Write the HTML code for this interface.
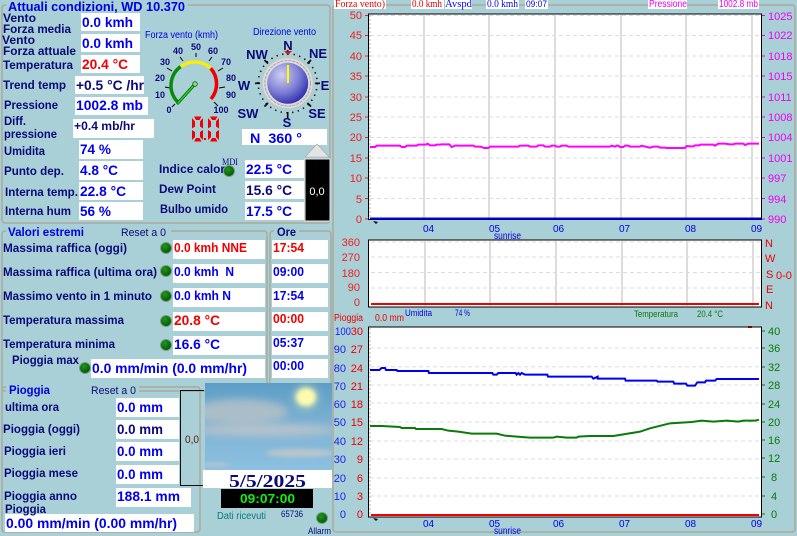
<!DOCTYPE html>
<html><head><meta charset="utf-8"><style>
html,body{margin:0;padding:0;background:#a9cfd7;width:797px;height:536px;overflow:hidden}
svg{display:block;font-family:"Liberation Sans",sans-serif}
.l{font:bold 12px "Liberation Sans",sans-serif;fill:#0a0a78}
.v{font:bold 14px "Liberation Sans",sans-serif;fill:#0000f0}
.r{fill:#f00000}.n{fill:#0a0a78}
.t{font:11px "Liberation Sans",sans-serif}
.a{font:11px "Liberation Sans",sans-serif}
.g{font:bold 9px "Liberation Sans",sans-serif;fill:#0a0a78;text-anchor:middle}
.c{font:bold 13px "Liberation Sans",sans-serif;fill:#0a0a78;text-anchor:middle}
.s{font:9px "Liberation Sans",sans-serif}
.w{fill:#fff}
.b{fill:none;stroke:#aaa99c;stroke-width:1.5}
.d{stroke:#dcdcdc;stroke-width:1;stroke-dasharray:4 3;fill:none}
.vl{stroke:#dcdcdc;stroke-width:2;fill:none}
</style></head><body>
<svg width="797" height="536" viewBox="0 0 797 536" xmlns="http://www.w3.org/2000/svg">
<defs>
<radialGradient id="ball" cx="35%" cy="30%" r="80%"><stop offset="0" stop-color="#cfcff2"/><stop offset=".55" stop-color="#7b7bd2"/><stop offset="1" stop-color="#2020a8"/></radialGradient>
<linearGradient id="sky" x1="0" y1="0" x2="0" y2="1"><stop offset="0" stop-color="#5c9dc6"/><stop offset=".5" stop-color="#7fb3d3"/><stop offset="1" stop-color="#8cc0e0"/></linearGradient>
<filter id="bl" x="-30%" y="-60%" width="160%" height="220%"><feGaussianBlur stdDeviation="4"/></filter>
<filter id="bl2" x="-50%" y="-50%" width="200%" height="200%"><feGaussianBlur stdDeviation="2"/></filter>
<clipPath id="skyc"><rect x="205" y="383" width="127" height="87"/></clipPath>
<radialGradient id="led" cx="40%" cy="35%" r="70%"><stop offset="0" stop-color="#1c9a1c"/><stop offset="1" stop-color="#005000"/></radialGradient>
</defs>

<!-- group boxes -->
<rect class="b" x="2" y="5" width="328" height="218" rx="3"/>
<rect class="b" x="2" y="231" width="265" height="160" rx="3"/>
<rect class="b" x="270" y="231" width="61" height="160" rx="3"/>
<rect class="b" x="2" y="387" width="198" height="145" rx="3"/>
<rect class="b" x="333" y="5" width="462" height="527" rx="3"/>

<!-- title masks -->
<rect x="6" y="0" width="182" height="10" fill="#a9cfd7"/>
<rect x="6" y="226" width="165" height="11" fill="#a9cfd7"/>
<rect x="274" y="226" width="25" height="11" fill="#a9cfd7"/>
<rect x="6" y="383" width="133" height="11" fill="#a9cfd7"/>

<text x="8" y="11" fill="#0000e0" textLength="177" lengthAdjust="spacingAndGlyphs" style="font:bold 13px 'Liberation Sans',sans-serif">Attuali condizioni, WD 10.370</text>

<!-- white boxes top -->
<rect class="w" x="81" y="13" width="59" height="18"/>
<rect class="w" x="81" y="34" width="59" height="18"/>
<rect class="w" x="81" y="55" width="59" height="18"/>
<rect class="w" x="75" y="76" width="69" height="18"/>
<rect class="w" x="75" y="97" width="73" height="18"/>
<rect class="w" x="73" y="119" width="81" height="19"/>
<rect class="w" x="79" y="140" width="64" height="19"/>
<rect class="w" x="79" y="161" width="64" height="19"/>
<rect class="w" x="79" y="182" width="64" height="18"/>
<rect class="w" x="79" y="202" width="64" height="18"/>
<rect class="w" x="245" y="160" width="59" height="18"/>
<rect class="w" x="245" y="181" width="59" height="18"/>
<rect class="w" x="245" y="202" width="59" height="18"/>
<rect class="w" x="242" y="129" width="85" height="16"/>

<!-- labels top -->
<text class="l" x="3" y="22" textLength="33" lengthAdjust="spacingAndGlyphs">Vento</text>
<text class="l" x="3" y="33" textLength="68" lengthAdjust="spacingAndGlyphs">Forza media</text>
<text class="l" x="2" y="44" textLength="33" lengthAdjust="spacingAndGlyphs">Vento</text>
<text class="l" x="3" y="55" textLength="73" lengthAdjust="spacingAndGlyphs">Forza attuale</text>
<text class="l" x="3" y="69" textLength="70" lengthAdjust="spacingAndGlyphs">Temperatura</text>
<text class="l" x="3" y="89" textLength="63" lengthAdjust="spacingAndGlyphs">Trend temp</text>
<text class="l" x="4" y="109" textLength="54" lengthAdjust="spacingAndGlyphs">Pressione</text>
<text class="l" x="4" y="125" textLength="22" lengthAdjust="spacingAndGlyphs">Diff.</text>
<text class="l" x="4" y="138" textLength="53" lengthAdjust="spacingAndGlyphs">pressione</text>
<text class="l" x="4" y="155" textLength="41" lengthAdjust="spacingAndGlyphs">Umidita</text>
<text class="l" x="4" y="175" textLength="60" lengthAdjust="spacingAndGlyphs">Punto dep.</text>
<text class="l" x="5" y="196" textLength="73" lengthAdjust="spacingAndGlyphs">Interna temp.</text>
<text class="l" x="5" y="215" textLength="66" lengthAdjust="spacingAndGlyphs">Interna hum</text>
<text class="l" x="159" y="173" textLength="66" lengthAdjust="spacingAndGlyphs">Indice calor</text>
<text class="l" x="159" y="193" textLength="57" lengthAdjust="spacingAndGlyphs">Dew Point</text>
<text class="l" x="160" y="213" textLength="68" lengthAdjust="spacingAndGlyphs">Bulbo umido</text>
<text class="s" x="222" y="165" fill="#0a0a78" textLength="16" lengthAdjust="spacingAndGlyphs" style="font-family:'Liberation Serif',serif">MDI</text>
<circle cx="229" cy="171" r="5.5" fill="url(#led)" stroke="#7d9a80"/>

<!-- values top -->
<text class="v" x="82" y="27" textLength="51" lengthAdjust="spacingAndGlyphs">0.0 kmh</text>
<text class="v" x="82" y="48" textLength="51" lengthAdjust="spacingAndGlyphs">0.0 kmh</text>
<text class="v r" x="82" y="69" textLength="46" lengthAdjust="spacingAndGlyphs">20.4 °C</text>
<text class="v n" x="76" y="90" textLength="68" lengthAdjust="spacingAndGlyphs">+0.5 °C /hr</text>
<text class="v" x="76" y="110" textLength="67" lengthAdjust="spacingAndGlyphs">1002.8 mb</text>
<text class="l" x="74" y="130" textLength="61" lengthAdjust="spacingAndGlyphs">+0.4 mb/hr</text>
<text class="v" x="80" y="154" textLength="31" lengthAdjust="spacingAndGlyphs">74 %</text>
<text class="v" x="80" y="175" textLength="38" lengthAdjust="spacingAndGlyphs">4.8 °C</text>
<text class="v" x="80" y="196" textLength="46" lengthAdjust="spacingAndGlyphs">22.8 °C</text>
<text class="v" x="80" y="216" textLength="31" lengthAdjust="spacingAndGlyphs">56 %</text>
<text class="v" x="246" y="174" textLength="46" lengthAdjust="spacingAndGlyphs">22.5 °C</text>
<text class="v n" x="246" y="195" textLength="46" lengthAdjust="spacingAndGlyphs">15.6 °C</text>
<text class="v" x="246" y="216" textLength="46" lengthAdjust="spacingAndGlyphs">17.5 °C</text>
<text class="v" x="250" y="143" textLength="52" lengthAdjust="spacingAndGlyphs" xml:space="preserve">N  360 °</text>

<!-- wind gauge -->
<text x="145" y="38" fill="#0000e0" textLength="73" lengthAdjust="spacingAndGlyphs" style="font:10px 'Liberation Sans',sans-serif">Forza vento (kmh)</text>
<g stroke="#000" stroke-width="1" fill="none">
<path d="M175 104 L172 107M170 88 L165 87M172 71 L167 68M183 61 L180 57M196 57 V53M209 61 L212 57M218 71 L223 68M219 88 L225 87M214 102 L218 106"/>
</g>
<path d="M177.300 101.600 A23.500 23.500 0 0 1 180.700 66.600" fill="none" stroke="#0a8a0a" stroke-width="3.500"/>
<path d="M180.700 66.600 A23.500 23.500 0 0 1 210.700 68.300" fill="none" stroke="#f5ee10" stroke-width="3.500"/>
<path d="M210.700 68.300 A23.500 23.500 0 0 1 211 99" fill="none" stroke="#f00000" stroke-width="3.500"/>
<path d="M177 104 L195 84" stroke="#0a5a0a" stroke-width="3" fill="none"/>
<path d="M177.500 103.500 L195 84" stroke="#10e010" stroke-width="1.500" fill="none"/>
<circle cx="195" cy="84" r="2.300" fill="#8fdf8f" stroke="#0a5a0a" stroke-width=".8"/>
<text class="g" x="169" y="113">0</text><text class="g" x="160" y="98">10</text><text class="g" x="160" y="81">20</text>
<text class="g" x="165" y="65">30</text><text class="g" x="178" y="54">40</text><text class="g" x="196" y="50">50</text>
<text class="g" x="213" y="54">60</text><text class="g" x="226" y="65">70</text><text class="g" x="231" y="81">80</text>
<text class="g" x="231" y="98">90</text><text class="g" x="221" y="113">100</text>

<!-- 7 seg -->
<g fill="#f00000">
<path d="M194 116.500H201.500L199.500 120H196ZM192 118L195 121.500V126.500L192 128.500ZM203 118L200 121.500V126.500L203 128.500ZM192 130L195 132V137L192 140ZM203 130L200 132V137L203 140ZM196 138H199.500L201.500 141.500H194Z"/>
<g transform="translate(16,0)"><path d="M194 116.500H201.500L199.500 120H196ZM192 118L195 121.500V126.500L192 128.500ZM203 118L200 121.500V126.500L203 128.500ZM192 130L195 132V137L192 140ZM203 130L200 132V137L203 140ZM196 138H199.500L201.500 141.500H194Z"/></g>
<rect x="204" y="138" width="2" height="2"/>
</g>

<!-- compass -->
<text x="253" y="35" fill="#0000e0" textLength="63" lengthAdjust="spacingAndGlyphs" style="font:10px 'Liberation Sans',sans-serif">Direzione vento</text>
<circle cx="287.700" cy="83.300" r="29.500" fill="none" stroke="#000" stroke-width="1.500" stroke-dasharray="1.300 4.490"/>
<g stroke="#000" stroke-width="1.600"><path d="M287.700 50V55M287.700 112V118M255 83.300H260M315 83.300H320M264.500 60L268 63.500M311 60L307.500 63.500M264.500 106.500L268 103M311 106.500L307.500 103"/></g>
<circle cx="287.700" cy="83.300" r="25.500" fill="#dcdcdc"/>
<circle cx="287.700" cy="83.300" r="25.500" fill="none" stroke="#c4c4c4" stroke-width="1"/>
<circle cx="287.700" cy="83.300" r="22.800" fill="none" stroke="#a8a8a8" stroke-width="1" stroke-dasharray="3 1"/>
<circle cx="287.700" cy="83.300" r="20.500" fill="url(#ball)"/>
<rect x="287" y="65" width="2" height="18" fill="#ffff00"/>
<path d="M284 51H292L288 55Z" fill="#e01010"/>
<text class="c" x="288" y="50">N</text><text class="c" x="318" y="58">NE</text><text class="c" x="325" y="90">E</text>
<text class="c" x="317" y="118">SE</text><text class="c" x="287" y="127">S</text><text class="c" x="248" y="118">SW</text>
<text class="c" x="244" y="90">W</text><text class="c" x="257" y="59">NW</text>

<!-- tube -->
<path d="M317 144L329 157H305Z" fill="#e4e4e4" stroke="#a8a8a0" stroke-width=".6"/>
<rect x="305" y="159" width="25" height="62" fill="#000" stroke="#e6e6e6" stroke-width="1"/>
<text x="317" y="195" class="a" fill="#fff" text-anchor="middle">0,0</text>

<!-- valori estremi -->
<text class="l" x="8" y="236" style="fill:#0000e0" textLength="76" lengthAdjust="spacingAndGlyphs">Valori estremi</text>
<text class="a" x="121" y="236" fill="#0a0a78" textLength="45" lengthAdjust="spacingAndGlyphs">Reset a 0</text>
<text class="l" x="277" y="236" textLength="19" lengthAdjust="spacingAndGlyphs">Ore</text>
<g class="w">
<rect x="173" y="240" width="92" height="19"/><rect x="173" y="264" width="92" height="19"/><rect x="173" y="288" width="92" height="19"/>
<rect x="173" y="312" width="92" height="19"/><rect x="173" y="336" width="92" height="19"/><rect x="91" y="359" width="174" height="19"/>
<rect x="272" y="240" width="56" height="19"/><rect x="272" y="264" width="56" height="19"/><rect x="272" y="288" width="56" height="19"/>
<rect x="272" y="312" width="56" height="19"/><rect x="272" y="336" width="56" height="19"/><rect x="272" y="359" width="56" height="19"/>
</g>
<text class="l" x="3" y="252" textLength="124" lengthAdjust="spacingAndGlyphs">Massima raffica (oggi)</text>
<text class="l" x="3" y="276" textLength="154" lengthAdjust="spacingAndGlyphs">Massima raffica (ultima ora)</text>
<text class="l" x="3" y="300" textLength="149" lengthAdjust="spacingAndGlyphs">Massimo vento in 1 minuto</text>
<text class="l" x="3" y="324" textLength="121" lengthAdjust="spacingAndGlyphs">Temperatura massima</text>
<text class="l" x="3" y="348" textLength="112" lengthAdjust="spacingAndGlyphs">Temperatura minima</text>
<text class="l" x="12" y="364" textLength="67" lengthAdjust="spacingAndGlyphs">Pioggia max</text>
<g fill="url(#led)" stroke="#7d9a80"><circle cx="166" cy="248" r="5.500"/><circle cx="166" cy="271" r="5.500"/><circle cx="166" cy="296" r="5.500"/><circle cx="166" cy="321" r="5.500"/><circle cx="166" cy="345" r="5.500"/><circle cx="85" cy="368" r="5.500"/></g>
<text class="v r" x="174" y="252" textLength="73" lengthAdjust="spacingAndGlyphs" style="font-size:13px">0.0 kmh NNE</text>
<text class="v" x="174" y="276" textLength="60" lengthAdjust="spacingAndGlyphs" style="font-size:13px" xml:space="preserve">0.0 kmh  N</text>
<text class="v" x="174" y="300" textLength="57" lengthAdjust="spacingAndGlyphs" style="font-size:13px">0.0 kmh N</text>
<text class="v r" x="174" y="325" textLength="46" lengthAdjust="spacingAndGlyphs">20.8 °C</text>
<text class="v" x="174" y="349" textLength="46" lengthAdjust="spacingAndGlyphs">16.6 °C</text>
<text class="v" x="92" y="373" textLength="155" lengthAdjust="spacingAndGlyphs">0.0 mm/min (0.0 mm/hr)</text>
<text class="v r" x="273" y="252" textLength="31" lengthAdjust="spacingAndGlyphs" style="font-size:13px">17:54</text>
<text class="v" x="273" y="276" textLength="31" lengthAdjust="spacingAndGlyphs" style="font-size:13px">09:00</text>
<text class="v" x="273" y="300" textLength="31" lengthAdjust="spacingAndGlyphs" style="font-size:13px">17:54</text>
<text class="v r" x="273" y="323" textLength="31" lengthAdjust="spacingAndGlyphs" style="font-size:13px">00:00</text>
<text class="v" x="273" y="347" textLength="31" lengthAdjust="spacingAndGlyphs" style="font-size:13px">05:37</text>
<text class="v" x="273" y="370" textLength="31" lengthAdjust="spacingAndGlyphs" style="font-size:13px">00:00</text>

<!-- pioggia -->
<text class="l" x="9" y="394" style="fill:#0000e0" textLength="41" lengthAdjust="spacingAndGlyphs">Pioggia</text>
<text class="a" x="91" y="394" fill="#0a0a78" textLength="45" lengthAdjust="spacingAndGlyphs">Reset a 0</text>
<g class="w">
<rect x="116" y="398" width="63" height="19"/><rect x="116" y="420" width="63" height="19"/><rect x="116" y="442" width="63" height="19"/>
<rect x="116" y="465" width="63" height="19"/><rect x="116" y="488" width="75" height="19"/><rect x="5" y="514" width="189" height="18"/>
</g>
<text class="l" x="5" y="411" textLength="54" lengthAdjust="spacingAndGlyphs">ultima ora</text>
<text class="l" x="3" y="433" textLength="77" lengthAdjust="spacingAndGlyphs">Pioggia (oggi)</text>
<text class="l" x="4" y="455" textLength="62" lengthAdjust="spacingAndGlyphs">Pioggia ieri</text>
<text class="l" x="4" y="477" textLength="74" lengthAdjust="spacingAndGlyphs">Pioggia mese</text>
<text class="l" x="4" y="500" textLength="73" lengthAdjust="spacingAndGlyphs">Pioggia anno</text>
<text class="l" x="5" y="513" textLength="41" lengthAdjust="spacingAndGlyphs">Pioggia</text>
<text class="v" x="117" y="412" textLength="46" lengthAdjust="spacingAndGlyphs">0.0 mm</text>
<text class="v n" x="117" y="434" textLength="46" lengthAdjust="spacingAndGlyphs">0.0 mm</text>
<text class="v" x="117" y="456" textLength="46" lengthAdjust="spacingAndGlyphs">0.0 mm</text>
<text class="v" x="117" y="479" textLength="46" lengthAdjust="spacingAndGlyphs">0.0 mm</text>
<text class="v" x="117" y="501" textLength="63" lengthAdjust="spacingAndGlyphs">188.1 mm</text>
<text class="v" x="6" y="528" textLength="171" lengthAdjust="spacingAndGlyphs">0.00 mm/min (0.00 mm/hr)</text>
<path d="M204 390.500H180.500V485.500H204" fill="none" stroke="#101010" stroke-width="1"/>
<text class="a" x="185" y="443" fill="#5a1a1a" textLength="14" lengthAdjust="spacingAndGlyphs">0,0</text>

<!-- sky -->
<g clip-path="url(#skyc)">
<rect x="205" y="383" width="127" height="87" fill="url(#sky)"/>
<ellipse cx="240" cy="412" rx="48" ry="13" fill="#b4c1c8" opacity=".85" filter="url(#bl)"/>
<ellipse cx="265" cy="430" rx="72" ry="6" fill="#bcc4cc" opacity=".9" filter="url(#bl)"/>
<ellipse cx="300" cy="453" rx="34" ry="4" fill="#bbc6cc" filter="url(#bl2)"/>
<ellipse cx="216" cy="465" rx="14" ry="2" fill="#b5c6d0" filter="url(#bl2)"/>
<circle cx="306" cy="397" r="13" fill="#e8e8a8" opacity=".4" filter="url(#bl)"/>
<ellipse cx="306" cy="397" rx="10" ry="9" fill="#fdfbb0" filter="url(#bl2)"/>
</g>
<rect class="w" x="203" y="470" width="129" height="18"/>
<text x="229" y="487" fill="#0a0a78" textLength="77" lengthAdjust="spacingAndGlyphs" style="font:bold 18px 'Liberation Serif',serif">5/5/2025</text>
<rect x="221" y="489" width="92" height="19" fill="#000"/>
<text x="240" y="503" fill="#10f010" textLength="55" lengthAdjust="spacingAndGlyphs" style="font:bold 13px 'Liberation Sans',sans-serif">09:07:00</text>
<text x="217" y="519" fill="#0a7a7a" textLength="49" lengthAdjust="spacingAndGlyphs" style="font:10px 'Liberation Sans',sans-serif">Dati ricevuti</text>
<text class="s" x="281" y="517" fill="#0a0a78" textLength="22" lengthAdjust="spacingAndGlyphs">65736</text>
<circle cx="322" cy="518" r="5.500" fill="url(#led)" stroke="#7d9a80"/>
<text class="s" x="308" y="534" fill="#0a0a78" textLength="23" lengthAdjust="spacingAndGlyphs">Allarm</text>

<!-- chart top labels -->
<g class="w">
<rect x="334" y="0" width="52" height="9"/><rect x="411" y="0" width="33" height="9"/><rect x="445" y="0" width="27" height="9"/>
<rect x="486" y="0" width="33" height="9"/><rect x="525" y="0" width="23" height="9"/><rect x="648" y="0" width="39" height="9"/><rect x="718" y="0" width="41" height="9"/>
</g>
<text x="335" y="7" fill="#f00000" textLength="50" lengthAdjust="spacingAndGlyphs" style="font:10px 'Liberation Serif',serif">Forza vento)</text>
<text x="412" y="7" fill="#e00000" textLength="30" lengthAdjust="spacingAndGlyphs" style="font:10px 'Liberation Serif',serif">0.0 kmh</text>
<text x="445" y="7" fill="#0000f0" textLength="27" lengthAdjust="spacingAndGlyphs" style="font:10px 'Liberation Serif',serif">Avspd</text>
<text x="487" y="7" fill="#0000e0" textLength="31" lengthAdjust="spacingAndGlyphs" style="font:10px 'Liberation Serif',serif">0.0 kmh</text>
<text class="s" x="526" y="7" fill="#0000e0" textLength="21" lengthAdjust="spacingAndGlyphs">09:07</text>
<text x="649" y="7" fill="#f000f0" textLength="38" lengthAdjust="spacingAndGlyphs" style="font:10px 'Liberation Sans',sans-serif">Pressione</text>
<text x="719" y="7" fill="#f000f0" textLength="39" lengthAdjust="spacingAndGlyphs" style="font:10px 'Liberation Sans',sans-serif">1002.8 mb</text>

<!-- chart 1 -->
<rect x="368.500" y="14" width="393" height="205.500" fill="#fff" stroke="#000" stroke-width="1"/>
<path class="d" d="M370 15.500H761M370 35.500H761M370 56H761M370 76H761M370 97H761M370 117H761M370 137.500H761M370 158H761M370 178H761M370 198.500H761"/>
<path class="vl" d="M424 15V218M489 15V218M555 15V218M621 15V218M686 15V218M752 15V218"/>
<path d="M370 15V218" stroke="#bbb" stroke-width="1" stroke-dasharray="2 2"/>
<g transform="translate(360,135) scale(.33333)" fill="none">
<path d="M30 36H45L50 32L55 32H120L125 36H135L140 32H170L175 29H197L203 26L210 31H225L230 29H240L245 28H268L275 36L285 32H340L345 35H360L365 36L372 39H385L390 35H475L480 32H505L510 35H530L535 31H550L555 35H570L575 32H585L590 35H600L605 32H620L625 35H750L755 32L765 35L770 32H775L780 36H790L795 32H805L810 35H840L845 32L870 38L880 35H895L900 38H915L920 39H975L980 33L990 34H1000L1005 31H1018L1020 29H1060L1065 32L1075 26H1095L1110 28H1120L1125 26H1150L1155 30L1165 26H1197" stroke="#ff00ff" stroke-width="6"/>
</g>
<path d="M370 218.500H761" stroke="#0000f0" stroke-width="2"/>
<g class="a" fill="#f02020" text-anchor="end">
<text x="362" y="19">50</text><text x="362" y="39">45</text><text x="362" y="60">40</text><text x="362" y="80">35</text><text x="362" y="101">30</text><text x="362" y="121">25</text><text x="362" y="141">20</text><text x="362" y="162">15</text><text x="362" y="182">10</text><text x="362" y="203">5</text><text x="362" y="223">0</text>
</g>
<path d="M365 15.500h3M365 35.500h3M365 56h3M365 76h3M365 97h3M365 117h3M365 137.500h3M365 158h3M365 178h3M365 198.500h3M365 219h3" stroke="#f02020"/>
<path d="M762 15.500h3M762 35.500h3M762 56h3M762 76h3M762 97h3M762 117h3M762 137.500h3M762 158h3M762 178h3M762 198.500h3M762 219h3" stroke="#f000f0"/>
<g class="a" fill="#f000f0">
<text x="768" y="20">1025</text><text x="768" y="39">1022</text><text x="768" y="60">1018</text><text x="768" y="80">1015</text><text x="768" y="101">1011</text><text x="768" y="121">1008</text><text x="768" y="141">1004</text><text x="768" y="162">1001</text><text x="768" y="182">997</text><text x="768" y="203">994</text><text x="768" y="223">990</text>
</g>
<path d="M373 221L378 222L376 224Z" fill="#000"/>
<g fill="#0000e0" style="font:10px 'Liberation Sans',sans-serif">
<text x="423" y="232">04</text><text x="489" y="232">05</text><text x="553" y="232">06</text><text x="619" y="232">07</text><text x="685" y="232">08</text><text x="751" y="232">09</text>
<text x="494" y="239" textLength="27" lengthAdjust="spacingAndGlyphs">sunrise</text>
</g>

<!-- chart 2 -->
<rect x="368.500" y="240" width="393" height="67" fill="#fff" stroke="#000" stroke-width="1"/>
<path class="d" d="M371 242H761M371 257H761M371 272.500H761M371 288H761"/>
<path class="vl" d="M425 241V306M490 241V306M556 241V306M622 241V306M687 241V306M753 241V306"/>
<path d="M371 304H759" stroke="#f00000" stroke-width="2"/>
<g class="a" fill="#f02020" text-anchor="end">
<text x="360" y="246">360</text><text x="360" y="261">270</text><text x="360" y="277">180</text><text x="360" y="291">90</text><text x="360" y="306">0</text>
</g>
<g class="a" fill="#f00000">
<text x="765" y="247">N</text><text x="765" y="262">W</text><text x="766" y="278">S</text><text x="766" y="293">E</text><text x="765" y="309">N</text><text x="776" y="279">0-0</text>
</g>
<text class="s" x="405" y="316" fill="#0000e0" textLength="27" lengthAdjust="spacingAndGlyphs">Umidita</text>
<text class="s" x="455" y="316" fill="#0000e0" textLength="15" lengthAdjust="spacingAndGlyphs">74 %</text>
<text class="s" x="634" y="317" fill="#0a7a0a" textLength="44" lengthAdjust="spacingAndGlyphs">Temperatura</text>
<text class="s" x="697" y="317" fill="#0a7a0a" textLength="26" lengthAdjust="spacingAndGlyphs">20.4 °C</text>
<text x="334" y="321" fill="#f00000" textLength="29" lengthAdjust="spacingAndGlyphs" style="font:10px 'Liberation Sans',sans-serif">Pioggia</text>
<text x="375" y="321" fill="#f00000" textLength="29" lengthAdjust="spacingAndGlyphs" style="font:10px 'Liberation Sans',sans-serif">0.0 mm</text>

<!-- chart 3 -->
<rect x="368.500" y="327" width="393" height="190" fill="#fff" stroke="#000" stroke-width="1"/>
<path class="d" d="M370 348H761M370 366.700H761M370 385H761M370 403H761M370 422H761M370 441H761M370 459H761M370 478H761M370 496H761"/>
<path d="M370 328V516" stroke="#bbb" stroke-width="1" stroke-dasharray="2 2"/>
<g transform="translate(330,350) scale(.33333)" fill="none" stroke-width="6">
<path stroke="#0000f0" d="M120 60H148L155 54H165L168 60H200L202 63H295L297 69H487L490 74H500L505 69H557L560 74L565 69L570 74L575 69L585 74H652L654 80H785L790 86L803 80V86H885L887 92H980L983 95H1030L1033 101H1068L1072 107H1095L1102 97H1125L1128 92H1155L1160 87H1287"/>
<path stroke="#0a7a0a" d="M120 228H155L210 231L215 234H255L258 237H335L355 242L385 245L425 251H500L525 257L560 260L600 263H670L680 260L710 263H740L745 260L780 258H850L880 253L930 245L960 235L1020 220L1085 216L1115 212L1150 215L1190 212L1225 215L1240 212H1275L1287 209"/>
</g>
<path d="M371 515H759" stroke="#f00000" stroke-width="2"/>
<path d="M748 326h4v2h-4z" fill="#800"/>
<g class="a" fill="#2020f0" text-anchor="end">
<text x="351" y="335" textLength="16" lengthAdjust="spacingAndGlyphs">100</text><text x="346" y="353">90</text><text x="346" y="372">80</text><text x="346" y="390">70</text><text x="346" y="408">60</text><text x="346" y="426">50</text><text x="346" y="445">40</text><text x="346" y="463">30</text><text x="346" y="482">20</text><text x="346" y="500">10</text><text x="346" y="518">0</text>
</g>
<g class="a" fill="#f00000" text-anchor="end">
<text x="363" y="335">30</text><text x="363" y="353">27</text><text x="363" y="372">24</text><text x="363" y="390">21</text><text x="363" y="408">18</text><text x="363" y="426">15</text><text x="363" y="445">12</text><text x="363" y="463">9</text><text x="363" y="482">6</text><text x="363" y="500">3</text><text x="363" y="518">0</text>
</g>
<path d="M762 331h3M762 348h3M762 367h3M762 385h3M762 404h3M762 422h3M762 440h3M762 458h3M762 477h3M762 496h3M762 514h3" stroke="#0a7a0a"/>
<g class="a" fill="#0a7a0a">
<text x="768" y="335">40</text><text x="768" y="352">36</text><text x="768" y="371">32</text><text x="768" y="389">28</text><text x="768" y="408">24</text><text x="768" y="426">20</text><text x="768" y="444">16</text><text x="768" y="462">12</text><text x="771" y="481">8</text><text x="771" y="500">4</text><text x="771" y="518">0</text>
</g>
<path d="M373 518L378 519L376 521Z" fill="#000"/>
<g fill="#0000e0" style="font:10px 'Liberation Sans',sans-serif">
<text x="423" y="527">04</text><text x="489" y="527">05</text><text x="553" y="527">06</text><text x="619" y="527">07</text><text x="685" y="527">08</text><text x="751" y="527">09</text>
<text x="494" y="534" textLength="27" lengthAdjust="spacingAndGlyphs">sunrise</text>
</g>
</svg>
</body></html>
